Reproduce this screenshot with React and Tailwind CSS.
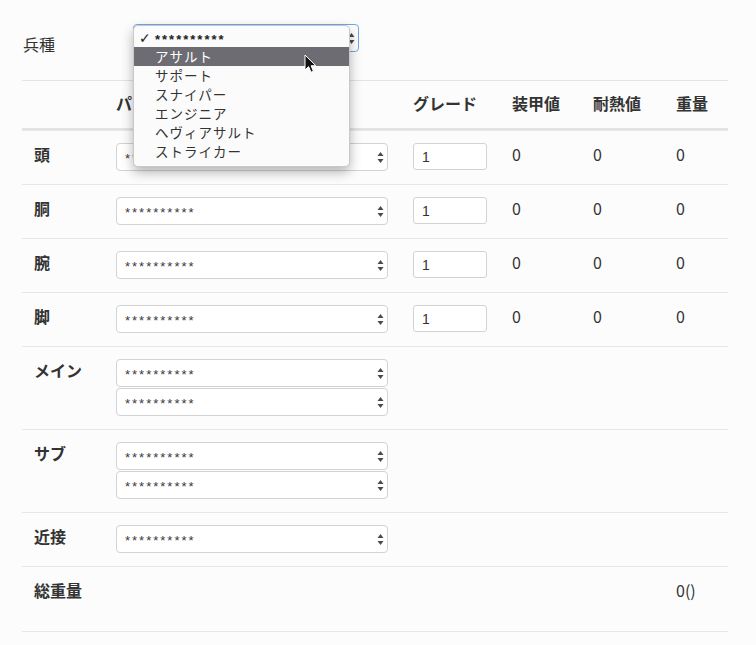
import React from "react";

function Arrows() {
  return (
    <svg width="7" height="13" viewBox="0 0 7 13" className="shrink-0">
      <path d="M3.5 1 L6.5 5 L0.5 5 Z" fill="#4a4a4a" />
      <path d="M3.5 12 L6.5 8 L0.5 8 Z" fill="#4a4a4a" />
    </svg>
  );
}

function Select() {
  return (
    <div className="flex items-center justify-between h-[28px] w-[272px] rounded-[4px] border border-[#d3d3d3] bg-white pl-[8px] pr-[3px]">
      <span className="font-['Liberation_Sans',sans-serif] text-[13px] leading-[13px] tracking-[2px] text-[#3a3a3a] pt-[3px]">**********</span>
      <Arrows />
    </div>
  );
}

function GradeInput() {
  return (
    <div className="flex items-center h-[27px] w-[74px] rounded-[3px] border border-[#d3d3d3] bg-white pl-[8px] font-['Liberation_Sans',sans-serif] text-[14px] text-[#333]">
      1
    </div>
  );
}

const ITEMS = ["アサルト", "サポート", "スナイパー", "エンジニア", "ヘヴィアサルト", "ストライカー"];

function Cursor() {
  return (
    <svg width="14" height="20" viewBox="0 0 14 20" className="absolute left-[304px] top-[54px] z-30">
      <path d="M1 1 L1 16 L4.6 12.6 L7 18.2 L9.4 17.2 L7.1 11.7 L11.8 11.7 Z" fill="#111" stroke="#fff" strokeWidth="1" strokeLinejoin="round" />
    </svg>
  );
}

function PartRow({ label }) {
  return (
    <div className="grid grid-cols-[82px_297px_99px_81px_83px_64px] h-[54px] border-t border-[#e6e6e6]">
      <div className="pl-[12px] pt-[11px] font-bold">{label}</div>
      <div className="pl-[12px] pt-[12px]"><Select /></div>
      <div className="pl-[12px] pt-[12px]"><GradeInput /></div>
      <div className="pl-[12px] pt-[11px]">0</div>
      <div className="pl-[12px] pt-[11px]">0</div>
      <div className="pl-[12px] pt-[11px]">0</div>
    </div>
  );
}

export default function App() {
  return (
    <div className="relative min-h-[645px] bg-[#fcfcfc] text-[#333] text-[16px] leading-[24px] font-['Noto_Sans_CJK_JP',sans-serif]">
      <div className="pl-[22px] w-[728px]">
        <div className="flex h-[80px]">
          <div className="w-[111px] pl-[1px] pt-[32px]">兵種</div>
          <div className="relative mt-[24px] w-[226px] h-[28px]">
            <div className="flex items-center justify-end h-[28px] w-[226px] rounded-[4px] border border-[#74a6e2] bg-white pr-[3px]">
              <Arrows />
            </div>
            <div className="absolute left-0 top-[1px] z-20 w-[217px] rounded-[5px] border border-[#c9c9c9] bg-[#fbfbfb] pt-[2px] pb-[5px] shadow-[0_5px_12px_rgba(0,0,0,0.3)]">
              <div className="flex items-center h-[19px] text-[13px] text-[#222]">
                <span className="w-[21px] pl-[5px] font-['DejaVu_Sans',sans-serif] text-[14px] leading-[14px] font-bold">✓</span>
                <span className="font-['Liberation_Sans',sans-serif] text-[13px] leading-[13px] tracking-[2px] font-bold pt-[3px]">**********</span>
              </div>
              {ITEMS.map((t, i) => (
                <div
                  key={t}
                  className={i === 0 ? "flex items-center h-[19px] pl-[21px] text-[13.5px] leading-[19px] tracking-[1px] bg-[#6d6c72] text-white" : "flex items-center h-[19px] pl-[21px] text-[13.5px] leading-[19px] tracking-[1px] text-[#333]"}
                >
                  {t}
                </div>
              ))}
            </div>
          </div>
        </div>

        <div className="grid grid-cols-[82px_297px_99px_81px_83px_64px] h-[50px] border-t border-b-2 border-[#e3e3e3] font-bold">
          <div className="pl-[12px] pt-[10px]"></div>
          <div className="pl-[12px] pt-[10px]">パーツ</div>
          <div className="pl-[12px] pt-[10px]">グレード</div>
          <div className="pl-[12px] pt-[10px]">装甲値</div>
          <div className="pl-[12px] pt-[10px]">耐熱値</div>
          <div className="pl-[12px] pt-[10px]">重量</div>
        </div>

        <PartRow label="頭" />
        <PartRow label="胴" />
        <PartRow label="腕" />
        <PartRow label="脚" />

        <div className="grid grid-cols-[82px_297px_99px_81px_83px_64px] h-[83px] border-t border-[#e6e6e6]">
          <div className="pl-[12px] pt-[11px] font-bold">メイン</div>
          <div className="pl-[12px] pt-[12px] flex flex-col gap-[1px]"><Select /><Select /></div>
        </div>
        <div className="grid grid-cols-[82px_297px_99px_81px_83px_64px] h-[83px] border-t border-[#e6e6e6]">
          <div className="pl-[12px] pt-[11px] font-bold">サブ</div>
          <div className="pl-[12px] pt-[12px] flex flex-col gap-[1px]"><Select /><Select /></div>
        </div>
        <div className="grid grid-cols-[82px_297px_99px_81px_83px_64px] h-[54px] border-t border-[#e6e6e6]">
          <div className="pl-[12px] pt-[11px] font-bold">近接</div>
          <div className="pl-[12px] pt-[12px]"><Select /></div>
        </div>
        <div className="grid grid-cols-[82px_297px_99px_81px_83px_64px] h-[66px] border-t border-b border-[#e6e6e6]">
          <div className="pl-[12px] pt-[11px] font-bold">総重量</div>
          <div></div>
          <div></div>
          <div></div>
          <div></div>
          <div className="pl-[12px] pt-[11px]">0()</div>
        </div>
      </div>
      <Cursor />
    </div>
  );
}
